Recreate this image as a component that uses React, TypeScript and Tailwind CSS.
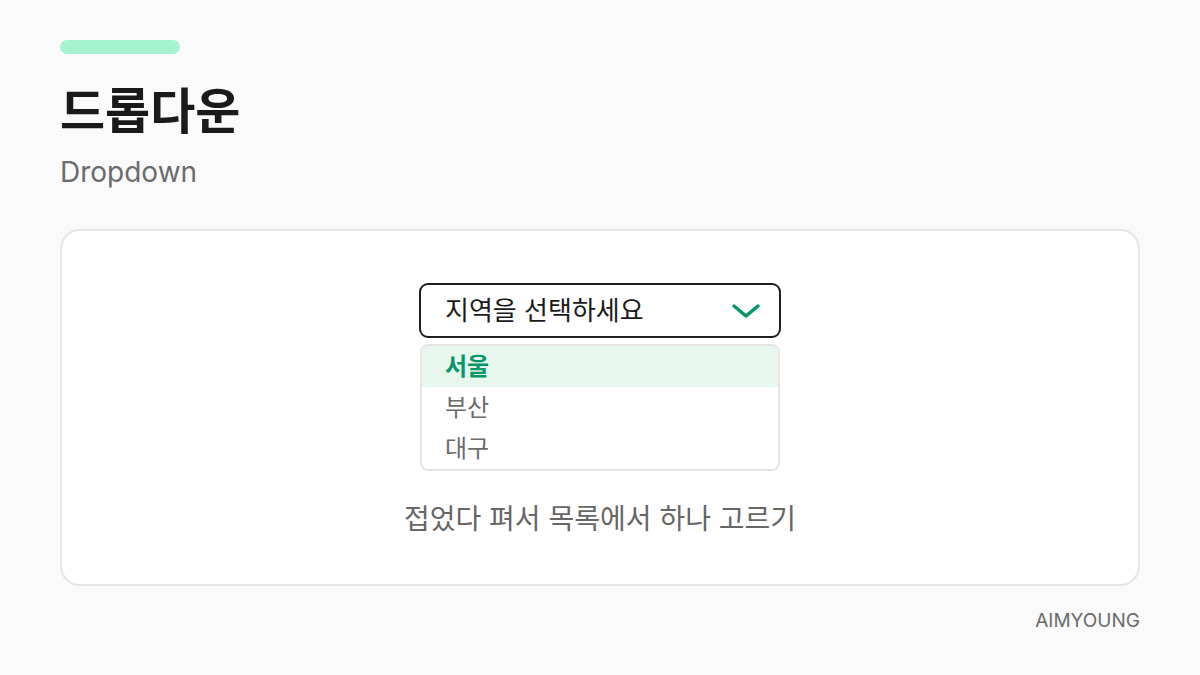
import React from "react";

const font = { fontFamily: 'Inter, "Noto Sans CJK KR", sans-serif' };

export default function App() {
  return (
    <div
      className="w-[1200px] h-[675px] bg-[#fafafa] px-[60px] pt-[40px] flex flex-col"
      style={font}
    >
      <div className="w-[120px] h-[14px] rounded-full bg-[#a7f3d0]" />
      <h1 className="mt-[30px] text-[49px] leading-[56px] font-bold text-[#1a1a1a]">
        드롭다운
      </h1>
      <div className="mt-[14px] text-[28px] leading-[36px] text-[#6b6b6b]">Dropdown</div>
      <div className="mt-[39px] h-[357px] rounded-[20px] border-2 border-[#e5e5e5] bg-white flex flex-col items-center pt-[52px]">
        <div className="w-[362px] h-[55px] rounded-[9px] border-[2.5px] border-[#1f1f1f] flex items-center justify-between pl-[24px] pr-[18px]">
          <span className="text-[26px] text-[#1a1a1a]">지역을 선택하세요</span>
          <svg width="30" height="18" viewBox="0 0 30 18" fill="none">
            <path d="M3 4 L15 14 L27 4" stroke="#059669" strokeWidth="3.5" strokeLinecap="round" strokeLinejoin="round" />
          </svg>
        </div>
        <div className="mt-[6px] w-[360px] rounded-[8px] border-2 border-[#e5e5e5] overflow-hidden flex flex-col">
          <div className="h-[41px] bg-[#e8f7ee] flex items-center pl-[23px] text-[24px] font-bold text-[#059669]">서울</div>
          <div className="h-[42px] flex items-center pl-[23px] text-[24px] text-[#6b6b6b]">부산</div>
          <div className="h-[40px] flex items-center pl-[23px] text-[24px] text-[#6b6b6b]">대구</div>
        </div>
        <div className="mt-[30px] text-[28px] leading-[36px] text-[#666666]">접었다 펴서 목록에서 하나 고르기</div>
      </div>
      <div className="mt-[21px] self-end text-[19px] text-[#6b6b6b]">AIMYOUNG</div>
    </div>
  );
}
